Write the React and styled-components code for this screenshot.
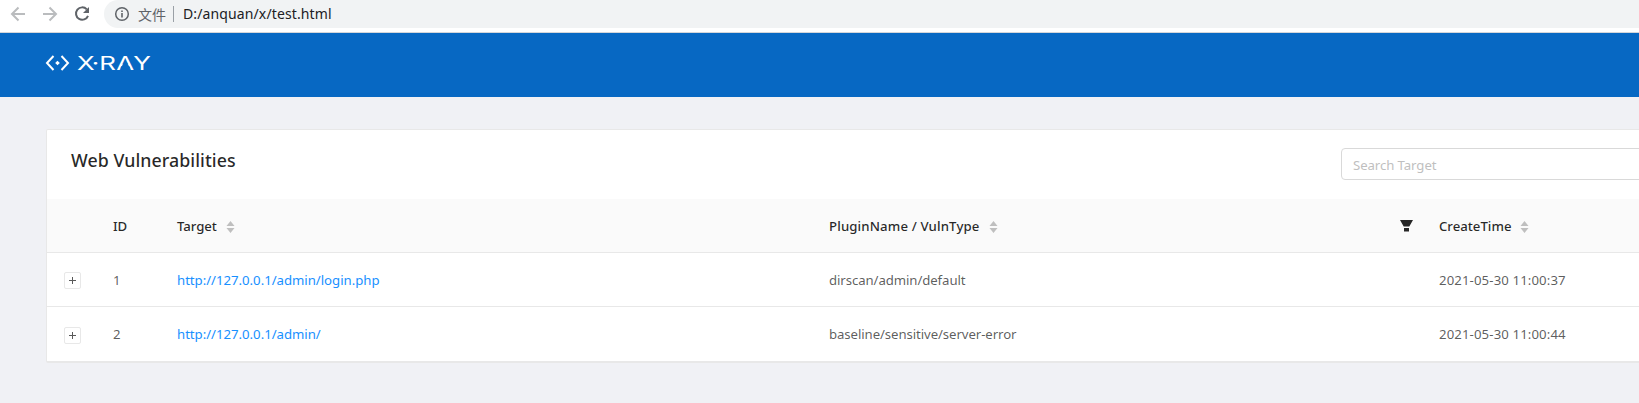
import React from "react";
import styled, { createGlobalStyle } from "styled-components";

const Global = createGlobalStyle`
  * { box-sizing: border-box; }
  html, body, #root { height: 100%; }
  body {
    margin: 0;
    overflow: hidden;
    background: #f0f1f5;
    font-family: "Noto Sans", "Open Sans", "Noto Sans CJK SC", sans-serif;
    font-size: 13.2px;
    color: rgba(0, 0, 0, 0.65);
  }
`;

const Page = styled.div`
  height: 403px;
  overflow: hidden;
`;

const BrowserBar = styled.div`
  display: flex;
  align-items: flex-start;
  height: 33px;
  padding-left: 8px;
  background: #fff;
  border-bottom: 1px solid #d3d6da;
`;

const NavButton = styled.span`
  display: flex;
  width: 20px;
  height: 28px;
  margin-right: 12px;
  align-items: center;
  justify-content: center;
`;

const Omnibox = styled.div`
  flex: 1;
  display: flex;
  align-items: center;
  height: 28px;
  padding-left: 10px;
  background: #f1f3f4;
  border-radius: 14px 0 0 14px;
`;

const Scheme = styled.span`
  width: 28px;
  margin-left: 8px;
  font-family: "Noto Sans CJK SC", sans-serif;
  font-size: 14px;
  font-weight: 400;
  line-height: 26px;
  color: #5f6368;
`;

const Divider = styled.span`
  width: 1px;
  height: 16px;
  margin: 0 9px 0 7px;
  background: #9aa0a6;
`;

const Address = styled.span`
  font-size: 14px;
  line-height: 26px;
  color: #202124;
  letter-spacing: 0.12px;
`;

const Header = styled.header`
  display: flex;
  height: 64px;
  padding: 18px 0 0 44px;
  background: #0768c3;
`;

const Card = styled.section`
  width: 1640px;
  margin: 32px 0 0 46px;
  background: #fff;
  border: 1px solid #e8e8e8;
  border-bottom-width: 2px;
  border-radius: 2px;
`;

const CardHead = styled.div`
  display: flex;
  justify-content: space-between;
  height: 69px;
  padding: 18px 0 0 24px;
`;

const Title = styled.h1`
  margin: 0;
  font-size: 17.8px;
  font-weight: 500;
  line-height: 24px;
  color: rgba(0, 0, 0, 0.85);
  letter-spacing: 0.06px;
`;

const Search = styled.div`
  width: 344px;
  height: 32px;
  padding-left: 11px;
  border: 1px solid #d9d9d9;
  border-radius: 4px;
  line-height: 33px;
  color: #bfbfbf;
  letter-spacing: -0.08px;
`;

const Row = styled.div`
  display: grid;
  grid-template-columns: 50px 64px 652px 610px 1fr;
  align-items: center;
  height: 54px;
  border-bottom: ${(p) => (p.$last ? "0" : "1px solid #e8e8e8")};
  background: ${(p) => (p.$head ? "#fafafa" : "#fff")};
  color: ${(p) => (p.$head ? "rgba(0,0,0,0.85)" : "inherit")};
  font-weight: ${(p) => (p.$head ? 500 : 400)};
`;

const Cell = styled.div`
  display: flex;
  align-items: center;
  padding: 1px 0 0 16px;
  white-space: nowrap;
  line-height: 21px;
`;

const Label = styled.span`
  letter-spacing: ${(p) => p.$track || 0}px;
`;

const Link = styled.a`
  color: #1890ff;
  letter-spacing: -0.02px;
`;

const Expand = styled.span`
  display: flex;
  align-items: center;
  justify-content: center;
  width: 17px;
  height: 17px;
  margin: 1px 0 0 1px;
  border: 1px solid #e8e8e8;
  border-radius: 2px;
  background: #fff;
`;

const SortIcon = styled.svg`
  margin: 2px 0 0 9px;
  flex: none;
`;

const FilterIcon = styled.svg`
  margin: 0 10px 1px auto;
  flex: none;
`;

const Sort = () => (
  <SortIcon width="9" height="12" viewBox="0 0 9 12" fill="#bfbfbf">
    <path d="M4.5 0L8.5 5H0.5Z M4.5 12L8.5 7H0.5Z" />
  </SortIcon>
);

const Plus = () => (
  <Expand>
    <svg width="7" height="7" viewBox="0 0 7 7" stroke="#595959" strokeWidth="1">
      <path d="M0 3.5H7M3.5 0V7" />
    </svg>
  </Expand>
);

const Logo = () => (
  <svg width="114" height="26" viewBox="0 0 114 26" role="img">
    <g fill="none" stroke="#fff" strokeWidth="2">
      <path d="M9.5 5L3 12L9.5 19M17.5 5L24 12L17.5 19" />
    </g>
    <path d="M13.5 9.7L15.8 12L13.5 14.3L11.2 12Z" fill="#fff" />
    <g transform="scale(1.35 1)" fontFamily="Inter, sans-serif" fontSize="19.2" fill="#fff">
      <text y="19" x="24.4 35.4 41 53.6 66.2">X·RAY</text>
    </g>
    {/* open counter of the A, without its crossbar */}
    <path d="M81.4 9.5L86.4 17.2H76.4Z" fill="#0768c3" />
  </svg>
);

const rows = [
  { id: "1", url: "http://127.0.0.1/admin/login.php", plugin: "dirscan/admin/default", time: "2021-05-30 11:00:37" },
  { id: "2", url: "http://127.0.0.1/admin/", plugin: "baseline/sensitive/server-error", time: "2021-05-30 11:00:44" },
];

export default function App() {
  return (
    <Page>
      <Global />
      <BrowserBar>
        <NavButton>
          <svg width="16" height="16" viewBox="0 0 16 16" fill="none" stroke="#babcbe" strokeWidth="2">
            <path d="M15 8H2.5M8.5 1.5L2 8L8.5 14.5" />
          </svg>
        </NavButton>
        <NavButton>
          <svg width="16" height="16" viewBox="0 0 16 16" fill="none" stroke="#babcbe" strokeWidth="2">
            <path d="M1 8H13.5M7.5 1.5L14 8L7.5 14.5" />
          </svg>
        </NavButton>
        <NavButton>
          <svg width="16" height="16" viewBox="0 0 16 16">
            <path d="M12.8 3.4A6.2 6.2 0 1 0 14 9.8" fill="none" stroke="#5f6368" strokeWidth="2" />
            <path d="M15 1V7H9Z" fill="#5f6368" />
          </svg>
        </NavButton>
        <Omnibox>
          <svg width="16" height="16" viewBox="0 0 16 16">
            <circle cx="8" cy="8" r="6.3" fill="none" stroke="#5f6368" strokeWidth="1.5" />
            <path d="M7.2 7H8.8V11.5H7.2ZM7.2 4.4H8.8V6H7.2Z" fill="#5f6368" />
          </svg>
          <Scheme>文件</Scheme>
          <Divider />
          <Address>D:/anquan/x/test.html</Address>
        </Omnibox>
      </BrowserBar>
      <Header>
        <Logo />
      </Header>
      <Card>
        <CardHead>
          <Title>Web Vulnerabilities</Title>
          <Search>Search Target</Search>
        </CardHead>
        <Row $head>
          <Cell />
          <Cell><Label $track={-0.2}>ID</Label></Cell>
          <Cell><Label $track={-0.05}>Target</Label><Sort /></Cell>
          <Cell>
            <Label $track={0.14}>PluginName / VulnType</Label>
            <Sort />
            <FilterIcon width="13" height="12" viewBox="0 0 13 12" fill="#262626">
              <path d="M0 0H13L9.3 6.5H3.7ZM4 8H9V11.5H4Z" />
            </FilterIcon>
          </Cell>
          <Cell><Label>CreateTime</Label><Sort /></Cell>
        </Row>
        {rows.map((r, i) => (
          <Row key={r.id} $last={i === rows.length - 1}>
            <Cell><Plus /></Cell>
            <Cell>{r.id}</Cell>
            <Cell><Link>{r.url}</Link></Cell>
            <Cell><Label $track={-0.08}>{r.plugin}</Label></Cell>
            <Cell><Label $track={0.11}>{r.time}</Label></Cell>
          </Row>
        ))}
      </Card>
    </Page>
  );
}
